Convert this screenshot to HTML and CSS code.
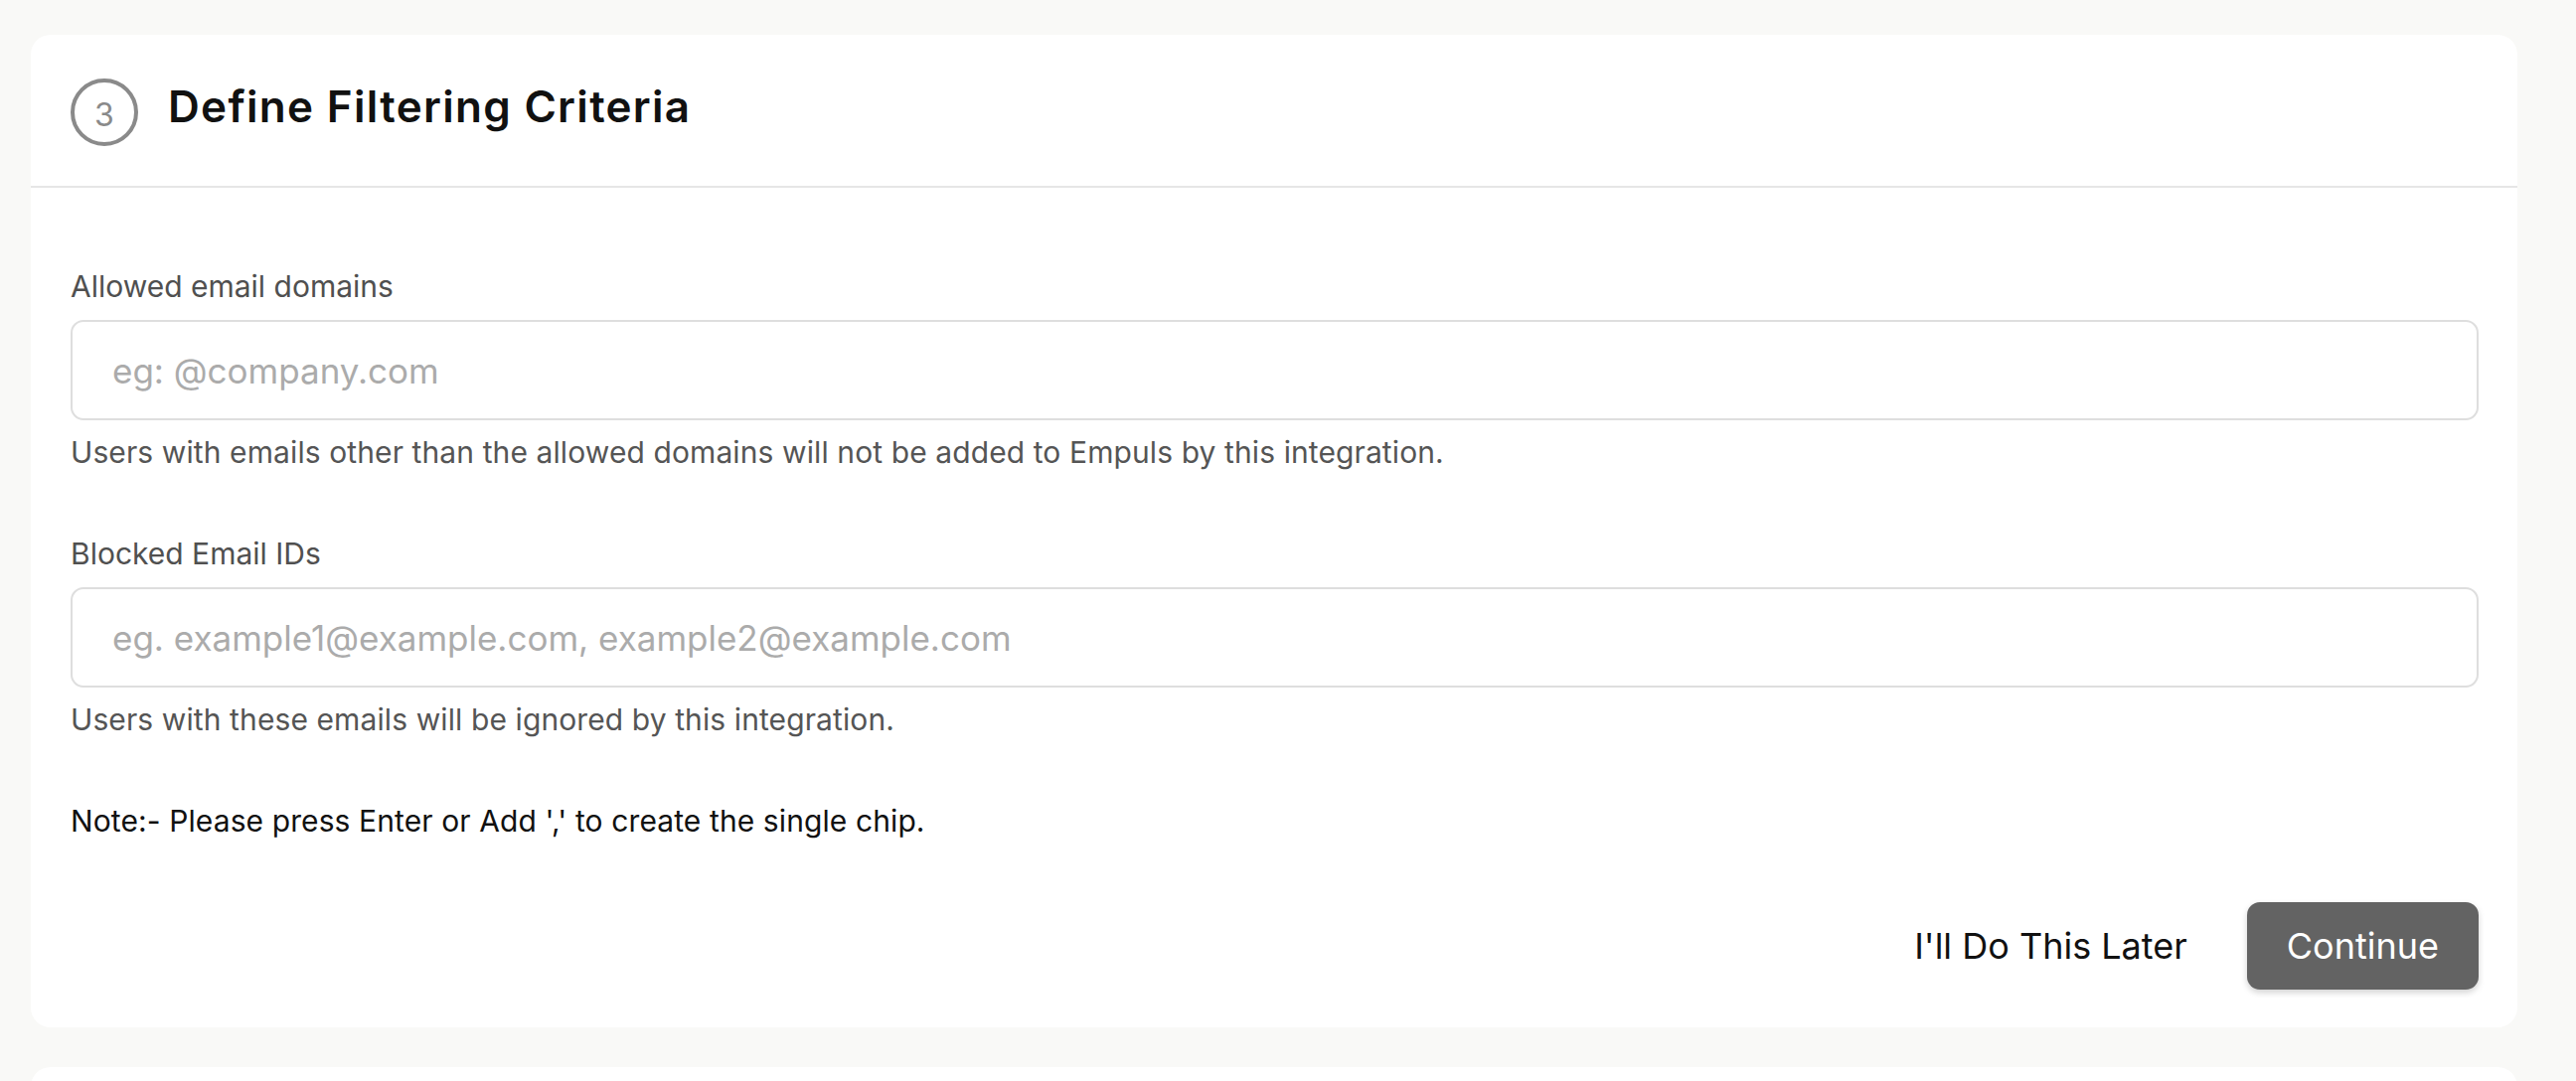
FILE: index.html
```html
<!DOCTYPE html>
<html lang="en">
<head>
<meta charset="utf-8">
<title>Define Filtering Criteria</title>
<link rel="stylesheet" href="styles.css">
</head>
<body>
<main class="page">
  <section class="card">
    <header class="card-header">
      <span class="step">3</span>
      <h2 class="card-title">Define Filtering Criteria</h2>
    </header>
    <div class="card-body">
      <div class="field">
        <label class="field-label" for="domains">Allowed email domains</label>
        <input class="field-input" id="domains" type="text" placeholder="eg: @company.com">
        <p class="field-help">Users with emails other than the allowed domains will not be added to Empuls by this integration.</p>
      </div>
      <div class="field">
        <label class="field-label" for="blocked">Blocked Email IDs</label>
        <input class="field-input" id="blocked" type="text" placeholder="eg. example1@example.com, example2@example.com">
        <p class="field-help">Users with these emails will be ignored by this integration.</p>
      </div>
      <p class="note">Note:- Please press Enter or Add ',' to create the single chip.</p>
      <div class="actions">
        <button class="btn btn-text" type="button">I'll Do This Later</button>
        <button class="btn btn-primary" type="button">Continue</button>
      </div>
    </div>
  </section>
  <section class="card card-next"></section>
</main>
</body>
</html>
```

FILE: styles.css
```css
* {
  box-sizing: border-box;
}

html, body {
  margin: 0;
  padding: 0;
  background: #f9f9f7;
  font-family: Inter, "Noto Sans", "Liberation Sans", sans-serif;
  color: #111;
  overflow: hidden;
}

.page {
  display: flex;
  flex-direction: column;
  gap: 40px;
  padding: 35px 59px 0 31px;
}

.card {
  background: #fff;
  border-radius: 20px;
}

.card-next {
  height: 80px;
}

.card-header {
  display: flex;
  align-items: center;
  gap: 30px;
  height: 154px;
  padding: 4px 40px 0;
  border-bottom: 2px solid #e6e6e6;
}

.step {
  display: flex;
  align-items: center;
  justify-content: center;
  width: 68px;
  height: 68px;
  border: 4px solid #8a8a8a;
  border-radius: 50%;
  color: #8a8a8a;
  font-size: 32px;
  padding-top: 4px;
}

.card-title {
  margin: 0;
  padding-bottom: 12px;
  font-size: 44px;
  font-weight: 600;
  color: #111;
  letter-spacing: 1.3px;
}

.card-body {
  display: flex;
  flex-direction: column;
  padding: 79px 39px 38px 40px;
}

.field {
  display: flex;
  flex-direction: column;
  margin-bottom: 62px;
}

.field-label {
  font-size: 30px;
  line-height: 40px;
  color: #505050;
  margin-bottom: 14px;
}

.field-input {
  height: 101px;
  border: 2px solid #dedede;
  border-radius: 13px;
  padding: 0 40px;
  font-family: inherit;
  font-size: 35px;
  color: #222;
  background: #fff;
  outline: none;
}

.field-input::placeholder {
  color: #ababab;
}

.field-help {
  margin: 12px 0 0;
  font-size: 30px;
  line-height: 40px;
  letter-spacing: 0.1px;
  color: #555;
}

.note {
  margin: 0;
  font-size: 30px;
  line-height: 40px;
  letter-spacing: 0.1px;
  color: #111;
}

.actions {
  display: flex;
  justify-content: flex-end;
  align-items: center;
  gap: 60px;
  margin-top: 62px;
}

.btn {
  font-family: inherit;
  font-size: 36px;
  border: none;
  cursor: pointer;
}

.btn-text {
  background: none;
  color: #111;
  padding: 0;
}

.btn-primary {
  height: 88px;
  padding: 0 40px;
  border-radius: 13px;
  background: #636363;
  color: #fff;
  box-shadow: 0 3px 6px rgba(0, 0, 0, 0.18);
}
```
